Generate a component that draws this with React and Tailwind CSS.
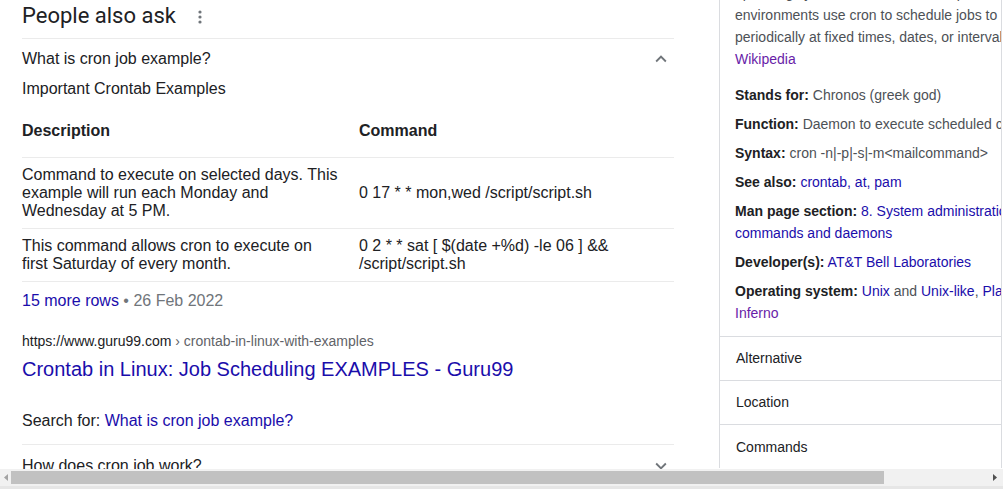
import React from 'react';

const Chevron = ({ up }) => (
  <svg width="22" height="22" viewBox="0 0 24 24" className="text-[#70757a]">
    <path fill="currentColor" d={up ? 'M7.41 15.41L12 10.83l4.59 4.58L18 14l-6-6-6 6z' : 'M7.41 8.59L12 13.17l4.59-4.58L18 10l-6 6-6-6z'} />
  </svg>
);

const Dots = () => (
  <svg width="4" height="14" viewBox="0 0 4 14" className="text-[#70757a]">
    <circle cx="2" cy="2" r="1.6" fill="currentColor" />
    <circle cx="2" cy="7" r="1.6" fill="currentColor" />
    <circle cx="2" cy="12" r="1.6" fill="currentColor" />
  </svg>
);

const Fact = ({ label, children }) => (
  <div className="mt-[7px] leading-[22px] whitespace-nowrap">
    <span className="font-bold text-[#202124]">{label}</span> {children}
  </div>
);

function App() {
  return (
    <div className="w-[1003px] h-[489px] bg-white overflow-hidden flex flex-col font-['Liberation_Sans',Arial,sans-serif]">
      <div className="h-[469px] flex overflow-hidden">
        {/* left column */}
        <div className="w-[652px] ml-[22px] shrink-0 text-[#202124]">
          <div className="h-[39px] border-b border-[#ebebeb] flex items-start pt-[2px] gap-[22px]">
            <span className="font-['Roboto',sans-serif] text-[22px] leading-[28px] text-[#202124]">People also ask</span>
            <span className="mt-[8px]"><Dots /></span>
          </div>
          <div className="h-[40px] flex items-center justify-between text-[16px] text-[#202124]">
            <span>What is cron job example?</span>
            <span className="mr-[2px]"><Chevron up /></span>
          </div>
          <div className="text-[16px] leading-[20px]">Important Crontab Examples</div>
          <div className="text-[16px]">
            <div className="h-[59px] flex items-end pb-[16px] border-b border-[#ebebeb] font-bold leading-[20px]">
              <div className="w-[337px]">Description</div>
              <div>Command</div>
            </div>
            <div className="h-[71px] flex items-center border-b border-[#ebebeb] leading-[18px]">
              <div className="w-[337px] pr-[19px]">Command to execute on selected days. This example will run each Monday and Wednesday at 5 PM.</div>
              <div>0 17 * * mon,wed /script/script.sh</div>
            </div>
            <div className="h-[53px] flex items-center border-b border-[#ebebeb] leading-[18px]">
              <div className="w-[337px] pr-[19px]">This command allows cron to execute on first Saturday of every month.</div>
              <div className="w-[260px]">0 2 * * sat [ $(date +%d) -le 06 ] &amp;&amp; /script/script.sh</div>
            </div>
          </div>
          <div className="mt-[9px] text-[16px] leading-[20px]">
            <span className="text-[#1a0dab]">15 more rows</span>
            <span className="text-[#70757a]"> • 26 Feb 2022</span>
          </div>
          <div className="mt-[20px] text-[14px] leading-[20px] text-[#202124]">
            https://www.guru99.com <span className="text-[#5f6368]">› crontab-in-linux-with-examples</span>
          </div>
          <div className="mt-[5px] text-[20px] leading-[26px] text-[#1a0dab]">Crontab in Linux: Job Scheduling EXAMPLES - Guru99</div>
          <div className="mt-[29px] text-[16px] leading-[20px]">
            Search for: <span className="text-[#1a0dab]">What is cron job example?</span>
          </div>
          <div className="mt-[13px] border-t border-[#ebebeb] h-[42px] flex items-center justify-between text-[16px]">
            <span>How does cron job work?</span>
            <span className="mr-[2px]"><Chevron /></span>
          </div>
        </div>

        {/* right knowledge panel */}
        <div className="ml-[45px] w-[283px] h-[468px] shrink-0 border-l border-r border-[#dadce0] overflow-hidden text-[14px] text-[#4d5156]">
          <div className="pl-[15px] pb-[12px] border-b border-[#dadce0]">
            <div className="-mt-[18px] leading-[22px] whitespace-nowrap">
              <div>operating systems. Users who set up and maintain software</div>
              <div>environments use cron to schedule jobs to run</div>
              <div>periodically at fixed times, dates, or intervals.</div>
              <div className="text-[#681da8] leading-[23px]">Wikipedia</div>
            </div>
            <div className="mt-[13px]">
              <Fact label="Stands for:">Chronos (greek god)</Fact>
              <Fact label="Function:">Daemon to execute scheduled commands</Fact>
              <Fact label="Syntax:">cron -n|-p|-s|-m&lt;mailcommand&gt;</Fact>
              <Fact label="See also:"><span className="text-[#1a0dab]">crontab, at, pam</span></Fact>
              <Fact label="Man page section:">
                <span className="text-[#1a0dab]">8. System administration<br />commands and daemons</span>
              </Fact>
              <Fact label="Developer(s):"><span className="text-[#1a0dab]">AT&amp;T Bell Laboratories</span></Fact>
              <Fact label="Operating system:">
                <span className="text-[#1a0dab]">Unix</span> and <span className="text-[#1a0dab]">Unix-like</span>, <span className="text-[#1a0dab]">Plan 9</span>,<br />
                <span className="text-[#681da8]">Inferno</span>
              </Fact>
            </div>
          </div>
          {['Alternative', 'Location', 'Commands'].map((t, i) => (
            <div key={t} className={`h-[44px] pl-[16px] flex items-center text-[#202124] ${i < 2 ? 'border-b border-[#dadce0]' : ''}`}>{t}</div>
          ))}
        </div>
      </div>

      {/* horizontal scrollbar */}
      <div className="h-[17px] bg-[#f1f1f1] flex items-center">
        <div className="w-[11px] h-full flex items-center justify-center">
          <svg width="4" height="7" viewBox="0 0 4 7"><path d="M4 0L0 3.5 4 7z" fill="#a3a3a3" /></svg>
        </div>
        <div className="w-[873px] h-[13px] bg-[#c1c1c1]" />
        <div className="flex-1" />
        <div className="w-[17px] h-full flex items-center justify-center">
          <svg width="4" height="7" viewBox="0 0 4 7"><path d="M0 0L4 3.5 0 7z" fill="#505050" /></svg>
        </div>
      </div>
      <div className="h-[3px] bg-[#e6e6e6]" />
    </div>
  );
}

export default App;
